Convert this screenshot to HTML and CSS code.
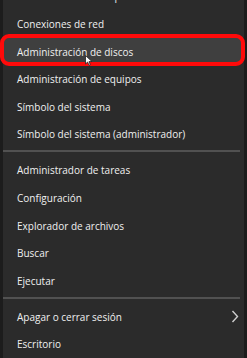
FILE: index.html
```html
<!DOCTYPE html>
<html lang="es">
<head>
<meta charset="utf-8">
<link rel="stylesheet" href="styles.css">
</head>
<body>
<div class="menu">
  <div class="item">Administrador de dispositivos</div>
  <div class="item">Conexiones de red</div>
  <div class="item active">Administración de discos
    <svg class="cursor" width="8" height="11" viewBox="0 0 8 11"><path d="M0.5 0.5 L0.5 9 L2.6 7 L4 10.3 L5.3 9.7 L4 6.6 L7 6.6 Z" fill="#fff" stroke="#222" stroke-width="0.8"/></svg>
  </div>
  <div class="item">Administración de equipos</div>
  <div class="item">Símbolo del sistema</div>
  <div class="item">Símbolo del sistema (administrador)</div>
  <div class="sep"></div>
  <div class="item">Administrador de tareas</div>
  <div class="item">Configuración</div>
  <div class="item">Explorador de archivos</div>
  <div class="item">Buscar</div>
  <div class="item">Ejecutar</div>
  <div class="sep"></div>
  <div class="item has-sub">Apagar o cerrar sesión
    <svg class="chev" width="8" height="13" viewBox="0 0 8 13"><path d="M1.5 1 L6.5 6.5 L1.5 12" fill="none" stroke="#cfcfcf" stroke-width="1.4"/></svg>
  </div>
  <div class="item">Escritorio</div>
</div>
</body>
</html>
```

FILE: styles.css
```css
html, body {
  margin: 0;
  padding: 0;
  background: #1c1c1c;
  overflow: hidden;
  width: 247px;
  height: 358px;
}

.menu {
  margin-left: 3px;
  width: 241px;
  height: 375.4px;
  margin-top: -17.4px;
  background: #2b2b2b;
  font-family: "Open Sans", "Noto Sans", sans-serif;
  font-size: 10px;
  color: #f0f0f0;
}

.item {
  position: relative;
  z-index: 0;
  height: 27.6px;
  display: flex;
  align-items: center;
  padding-left: 14px;
  white-space: nowrap;
}

.item.active::before {
  content: "";
  position: absolute;
  left: -3px;
  right: -1px;
  top: -4px;
  bottom: -1px;
  border: 4.5px solid #ff0a0a;
  border-radius: 9px;
  background: #3f3f3f;
  z-index: -1;
}

.cursor {
  position: absolute;
  left: 82px;
  top: 17px;
}

.chev {
  position: absolute;
  right: 5px;
  top: 7px;
}

.sep {
  height: 8.4px;
  box-sizing: border-box;
  padding-top: 2.2px;
  padding-right: 4px;
}

.sep::before {
  content: "";
  display: block;
  height: 2px;
  background: #515151;
}
```
